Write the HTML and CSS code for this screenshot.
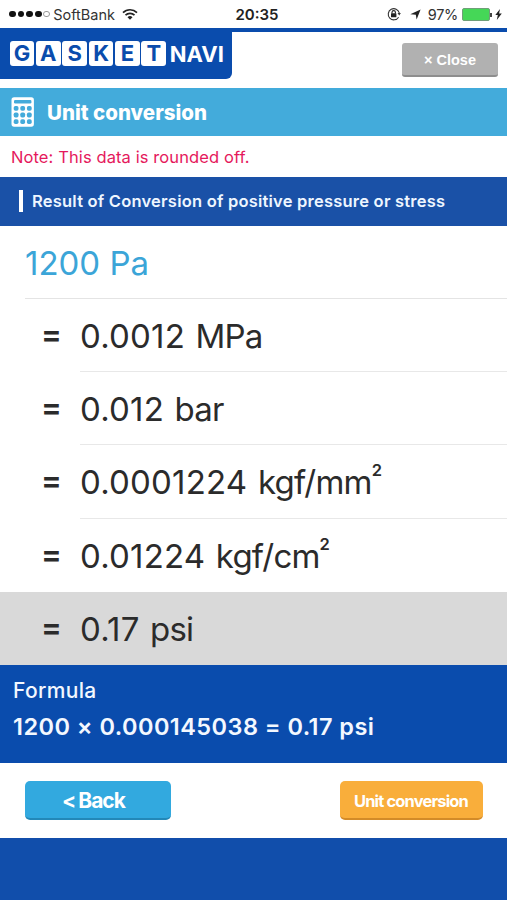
FILE: index.html
```
<!DOCTYPE html>
<html lang="en">
  <head>
    <meta charset="UTF-8">
    <meta name="viewport" content="width=device-width, initial-scale=1.0">
    <title>Gasket Navi - Unit conversion</title>
    <link rel="stylesheet" href="styles.css">
  </head>
  <body>
    <div class="status-bar">
      <div class="status-left">
        <div class="signal"><i></i><i></i><i></i><i></i><i class="empty"></i></div>
        <span class="carrier">SoftBank</span>
        <svg class="wifi" width="16" height="12" viewBox="0 0 16 12">
          <path d="M1 4.6a10 10 0 0 1 14 0M3.5 7.2a6.4 6.4 0 0 1 9 0" fill="none" stroke="#222" stroke-width="1.7"/>
          <path d="M8 11.8 5.5 9.3a3.5 3.5 0 0 1 5 0z" fill="#222"/>
        </svg>
      </div>
      <span class="clock">20:35</span>
      <div class="status-right">
        <svg class="lock" width="14" height="14" viewBox="0 0 14 14">
          <path d="M11.6 10.2A5.6 5.6 0 1 1 12.3 6" fill="none" stroke="#333" stroke-width="1.1"/>
          <path d="M10.5 6h3.4l-1.7 2.6z" fill="#333"/>
          <rect x="4" y="6.3" width="5.4" height="4" rx=".5" fill="#222"/>
          <path d="M5 6.6V5.3a1.7 1.7 0 0 1 3.4 0v1.3" fill="none" stroke="#222" stroke-width="1.1"/>
        </svg>
        <svg class="location" width="11" height="11" viewBox="0 0 11 11">
          <path d="M10.6.5 6.6 10.6 5.8 5.8.3 5.2z" fill="#222"/>
        </svg>
        <span class="percent">97%</span>
        <div class="battery"></div>
        <svg class="bolt" width="7" height="11" viewBox="0 0 7 11">
          <path d="M5 0 .3 6.1h2.5L1.8 11l5-6.5H4.1z" fill="#222"/>
        </svg>
      </div>
    </div>

    <header class="header">
      <div class="logo">
        <b>G</b><b>A</b><b>S</b><b>K</b><b>E</b><b>T</b>
        <span>NAVI</span>
      </div>
      <button class="close" type="button">× Close</button>
    </header>

    <div class="page-title">
      <svg width="24" height="30" viewBox="0 0 24 30">
        <rect x=".5" y=".3" width="22.4" height="29.4" rx="2.6" fill="#fff"/>
        <rect x="3" y="2.9" width="17.4" height="3.6" rx="1.2" fill="#43abdb"/>
        <g fill="#43abdb">
          <rect x="2.7" y="9" width="4.8" height="4.8" rx="1.7"/>
          <rect x="9.3" y="9" width="4.8" height="4.8" rx="1.7"/>
          <rect x="15.9" y="9" width="4.8" height="4.8" rx="1.7"/>
          <rect x="2.7" y="15.6" width="4.8" height="4.8" rx="1.7"/>
          <rect x="9.3" y="15.6" width="4.8" height="4.8" rx="1.7"/>
          <rect x="15.9" y="15.6" width="4.8" height="4.8" rx="1.7"/>
          <rect x="2.7" y="22.2" width="4.8" height="4.8" rx="1.7"/>
          <rect x="9.3" y="22.2" width="4.8" height="4.8" rx="1.7"/>
          <rect x="15.9" y="22.2" width="4.8" height="4.8" rx="1.7"/>
        </g>
      </svg>
      <h1>Unit conversion</h1>
    </div>

    <p class="note">Note: This data is rounded off.</p>

    <h2 class="result-title"><span>Result of Conversion of positive pressure or stress</span></h2>

    <div class="source"><span>1200 Pa</span></div>
    <ul class="results">
      <li><i>=</i><span>0.0012 <em>MPa</em></span></li>
      <li><i>=</i><span>0.012 <em>bar</em></span></li>
      <li><i>=</i><span>0.0001224 <em>kgf/mm</em><sup>2</sup></span></li>
      <li><i>=</i><span>0.01224 <em>kgf/cm</em><sup>2</sup></span></li>
      <li class="selected"><i>=</i><span>0.17 <em>psi</em></span></li>
    </ul>

    <div class="formula">
      <h3>Formula</h3>
      <p>1200 × 0.000145038 = 0.17 psi</p>
    </div>

    <div class="actions">
      <button class="back" type="button">&lt; Back</button>
      <button class="convert" type="button">Unit conversion</button>
    </div>

    <footer></footer>
  </body>
</html>
```
FILE: styles.css
```
* {
  margin: 0;
  padding: 0;
  box-sizing: border-box;
}

body {
  font-family: Inter, "Liberation Sans", sans-serif;
  background: #fff;
  color: #2b2b2b;
  height: 900px;
  display: flex;
  flex-direction: column;
  overflow: hidden;
  white-space: nowrap;
}

button {
  border: none;
  color: #fff;
  font-family: inherit;
  font-weight: 700;
}

/* status bar */
.status-bar {
  height: 28px;
  display: grid;
  grid-template-columns: 1fr auto 1fr;
  align-items: center;
  padding: 0 5px 0 9px;
  font-size: 14.5px;
  color: #333;
}

.status-left,
.status-right {
  display: flex;
  align-items: center;
}

.status-right {
  justify-content: flex-end;
}

.signal {
  display: flex;
  gap: 1.8px;
}

.signal i {
  width: 6.8px;
  height: 6.8px;
  border-radius: 50%;
  background: #111;
}

.signal .empty {
  background: none;
  border: 1px solid #999;
}

.carrier {
  margin-left: 3px;
}

.wifi {
  margin-left: 7px;
}

.clock {
  padding-left: 3px;
  font-size: 15px;
  font-weight: 600;
  color: #222;
}

.location {
  margin-left: 9px;
}

.percent {
  margin-left: 7px;
  letter-spacing: -0.3px;
}

.battery {
  position: relative;
  width: 28px;
  height: 13px;
  margin: 0 5px 0 4px;
  border: 1px solid #6f9f78;
  border-radius: 2px;
  background: #45d757;
}

.battery::after {
  content: "";
  position: absolute;
  right: -3px;
  top: 4px;
  width: 2px;
  height: 4px;
  background: #444;
}

/* header */
.header {
  height: 59.5px;
  display: flex;
  justify-content: space-between;
  align-items: flex-start;
  border-top: 4.5px solid #0a4cad;
  padding-right: 9px;
}

.logo {
  width: 232px;
  height: 47px;
  display: flex;
  gap: 1.6px;
  padding: 9px 0 0 9.5px;
  background: #0a4cad;
  border-bottom-right-radius: 6px;
}

.logo b {
  width: 24.8px;
  height: 25px;
  border-radius: 3px;
  background: #fff;
  color: #0a4cad;
  font-size: 22px;
  font-weight: 700;
  line-height: 25px;
  text-align: center;
}

.logo span {
  margin-left: 2px;
  color: #fff;
  font-size: 22px;
  font-weight: 700;
  line-height: 27px;
}

.close {
  width: 96px;
  height: 33.5px;
  margin-top: 11px;
  border-radius: 3px;
  border-bottom: 2px solid #8e8e8e;
  background: #b1b1b1;
  font-family: "Liberation Sans", sans-serif;
  font-size: 14.5px;
  line-height: 34px;
}

.page-title {
  height: 48.5px;
  display: flex;
  align-items: center;
  gap: 12px;
  padding-left: 11px;
  background: #43abdb;
  color: #fff;
}

.page-title h1 {
  padding-top: 2px;
  font-size: 20.5px;
  font-weight: 800;
}

.note {
  height: 41px;
  padding-left: 11px;
  color: #e5195c;
  font-size: 16.5px;
  letter-spacing: 0.1px;
  line-height: 42px;
}

.result-title {
  height: 48.5px;
  display: flex;
  align-items: center;
  padding-left: 19px;
  background: #1a51a7;
  color: #eef6ff;
  font-size: 16.5px;
  font-weight: 600;
  letter-spacing: 0.22px;
}

.result-title::before {
  content: "";
  width: 4px;
  height: 22px;
  margin-right: 9px;
  background: #fff;
}

/* conversion results */
.source {
  height: 73px;
  margin-left: 25px;
  border-bottom: 1px solid #e4e4e4;
  color: #3ba5d8;
  font-size: 33px;
  line-height: 74px;
}

.results {
  list-style: none;
  font-size: 33px;
}

.results li {
  height: 73.4px;
  display: flex;
  line-height: 74px;
}

.results i {
  width: 80px;
  padding-left: 41px;
  font-size: 31px;
  font-style: normal;
  font-weight: 600;
  line-height: 70px;
}

.results span {
  flex: 1;
  border-bottom: 1px solid #e8e8e8;
  letter-spacing: 0.2px;
}

.results em {
  margin-left: 1px;
  font-style: normal;
  letter-spacing: -0.8px;
}

.results sup {
  font-size: 16.5px;
  font-weight: 600;
  line-height: 0;
  vertical-align: 18px;
}

.results .selected {
  background: #d9d9d9;
}

.results li:nth-last-child(-n+2) span {
  border-bottom: none;
}

.formula {
  height: 97.5px;
  padding: 12px 13px;
  background: #0a4cad;
  color: #f3f8ff;
}

.formula h3 {
  font-size: 21px;
  font-weight: 500;
  letter-spacing: 0.35px;
  line-height: 28px;
}

.formula p {
  margin-top: 5px;
  font-size: 23.5px;
  font-weight: 600;
  letter-spacing: 0.45px;
  line-height: 34px;
}

.actions {
  height: 75.5px;
  display: flex;
  justify-content: space-between;
  align-items: flex-start;
  padding: 18px 24.5px 0 25px;
}

.actions button {
  height: 39.5px;
  border-radius: 5px;
}

.back {
  width: 146px;
  padding: 2px 9px 0 0;
  background: #32a9df;
  border-bottom: 2.5px solid #2388b8;
  font-size: 21px;
  letter-spacing: -1px;
  word-spacing: -1px;
}

.convert {
  width: 143px;
  padding-top: 2px;
  background: #f9ae3b;
  border-bottom: 2.5px solid #d38b28;
  font-size: 16.5px;
  letter-spacing: -0.85px;
}

footer {
  flex: 1;
  background: #114eab;
}
```
